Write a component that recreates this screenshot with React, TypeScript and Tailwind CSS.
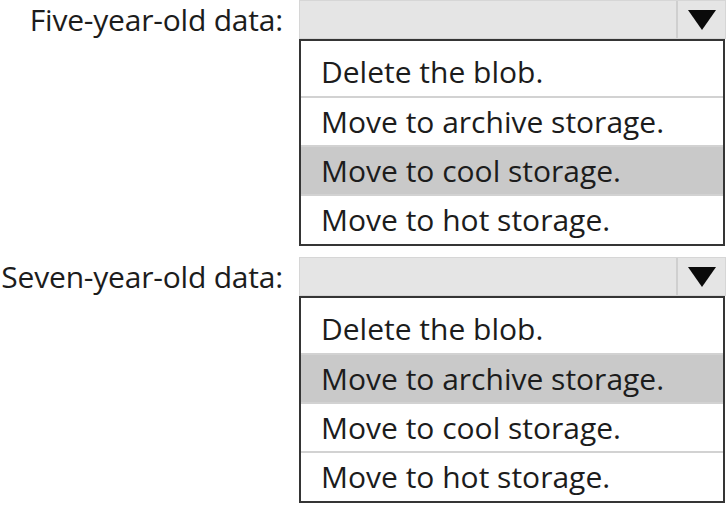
import React from "react";

const options = [
  "Delete the blob.",
  "Move to archive storage.",
  "Move to cool storage.",
  "Move to hot storage.",
];

function Dropdown({ label, selected, gap }: { label: string; selected: number; gap?: boolean }) {
  return (
    <div className={gap ? "mt-[11px]" : ""}>
      {/* select bar */}
      <div className="flex items-stretch h-[39px]">
        <div className="w-[284px] shrink-0 flex items-center justify-end pr-[1px] text-[30px] leading-[39px] tracking-[-0.2px] whitespace-nowrap text-[#1c1c1c]">
          {label}
        </div>
        <div className="ml-[15px] flex-1 flex bg-[#e5e5e5] border border-[#d6d6d6]">
          <div className="flex-1" />
          <div className="w-[49px] border-l-2 border-[#cfcfcf] flex items-center justify-center">
            <svg width="28" height="20" viewBox="0 0 28 20">
              <polygon points="0,0 28,0 14,20" fill="#0a0a0a" />
            </svg>
          </div>
        </div>
      </div>
      {/* option list */}
      <div className="ml-[299px] mr-[1px] border-2 border-[#353535] bg-white pt-[6px] pb-[1px]">
        {options.map((o, i) => (
          <div
            key={o}
            className={
              "h-[49px] flex items-center pl-5 text-[30px] whitespace-nowrap text-[#1c1c1c] " +
              (i > 0 ? "border-t-2 border-[#d2d2d2] " : "") +
              (i === selected ? "bg-[#c9c9c9]" : "")
            }
          >
            {o}
          </div>
        ))}
      </div>
    </div>
  );
}

export default function App() {
  return (
    <div
      className="w-[726px] h-[506px] bg-white overflow-hidden"
      style={{ fontFamily: '"Open Sans", "Noto Sans", sans-serif' }}
    >
      <Dropdown label="Five-year-old data:" selected={2} />
      <Dropdown label="Seven-year-old data:" selected={1} gap />
    </div>
  );
}
